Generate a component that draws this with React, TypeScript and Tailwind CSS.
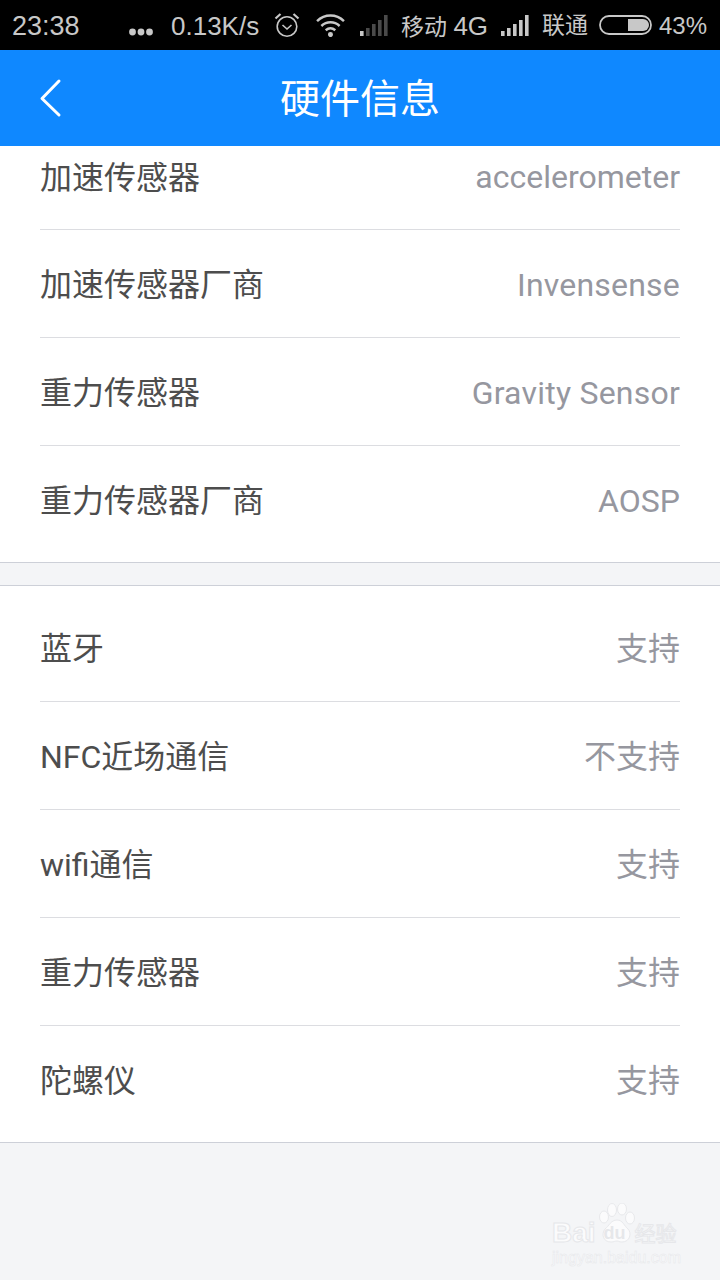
import { ReactNode } from "react";

const sans = "font-['Roboto','Noto_Sans_CJK_SC',sans-serif]";

function Bars({ dim }: { dim?: boolean }) {
  const heights = [5, 8, 12, 16, 21];
  return (
    <svg width="28" height="21" viewBox="0 0 28 21" className="shrink-0">
      {heights.map((h, i) => (
        <rect
          key={i}
          x={i * 6}
          y={21 - h}
          width="3.6"
          height={h}
          fill={dim && i > 0 ? "#4a4a4a" : "#c8c8c8"}
        />
      ))}
    </svg>
  );
}

function StatusBar() {
  return (
    <div className="relative h-[50px] bg-black text-[#c8c8c8] font-['Liberation_Sans','Noto_Sans_CJK_SC',sans-serif]">
      <div className="flex h-full items-center pl-3 text-[27px] leading-none">
        <span className="w-[68px] pt-[2px]">23:38</span>
        <svg width="24" height="8" viewBox="0 0 24 8" className="ml-[49px] mt-[13px] shrink-0" fill="#c8c8c8">
          <circle cx="3.500" cy="4" r="3.400" />
          <circle cx="12" cy="4" r="3.400" />
          <circle cx="20.500" cy="4" r="3.400" />
        </svg>
        <span className="ml-[18px] w-[89px] whitespace-nowrap pt-[2px] text-[26px]">0.13K/s</span>
        <svg width="26" height="26" viewBox="0 0 26 26" className="ml-[14px] shrink-0" fill="none" stroke="#c8c8c8" strokeWidth="1.600">
          <circle cx="13" cy="14.500" r="9.800" />
          <path d="M8.500 13l4.500 4 4.500-4" />
          <path d="M1.500 6.500 6.500 2M24.500 6.500 19.500 2" strokeWidth="2.200" />
        </svg>
        <svg width="31" height="24" viewBox="0 0 32 25" className="ml-[15px] shrink-0" fill="none" stroke="#c8c8c8" strokeWidth="2.600">
          <path d="M2 8.500C10 .8 22 .8 30 8.500" />
          <path d="M6.500 13.500C12 8.500 20 8.500 25.500 13.500" />
          <path d="M11 18c3-2.500 7-2.500 10 0" />
          <circle cx="16" cy="22.500" r="2.600" fill="#c8c8c8" stroke="none" />
        </svg>
        <span className="ml-[14px]"><Bars dim /></span>
        <span className="ml-[13px] w-[87px] whitespace-nowrap pt-[2px] text-[23px]">移动 <span className="text-[26px]">4G</span></span>
        <span className="ml-[13px]"><Bars /></span>
        <span className="ml-[13px] w-[47px] whitespace-nowrap pt-[1px] text-[23px]">联通</span>
        <svg width="54" height="20" viewBox="0 0 54 20" className="ml-[10px] shrink-0">
          <rect x="1" y="1" width="51" height="18" rx="9" fill="none" stroke="#c8c8c8" strokeWidth="1.800" />
          <path d="M29 4h15a6 6 0 0 1 0 12H29z" fill="#c8c8c8" />
        </svg>
        <span className="ml-[6px] pt-[2px] text-[24px]">43%</span>
      </div>
    </div>
  );
}

function Header() {
  return (
    <div className="relative flex h-[96px] items-center justify-center bg-[#0f88ff]">
      <svg width="24" height="40" viewBox="0 0 24 40" className="absolute left-[39px] top-[28px]" fill="none" stroke="#fff" strokeWidth="3" strokeLinecap="round" strokeLinejoin="round">
        <path d="M20 3 3 20.500 20 37" />
      </svg>
      <h1 className={`pt-1 text-[40px] leading-none text-white ${sans}`}>硬件信息</h1>
    </div>
  );
}

function Row({ label, value, className, last }: { label: string; value: ReactNode; className: string; last?: boolean }) {
  return (
    <div className={`flex items-center justify-between ${className} ${last ? "" : "border-b border-[#dcdde1]"}`}>
      <span className="text-[32px] leading-none text-[#4d4d4d]">{label}</span>
      <span className="text-[32px] leading-none text-[#96979f]">{value}</span>
    </div>
  );
}

export default function App() {
  return (
    <div className={`relative h-[1280px] w-[720px] overflow-hidden bg-[#f4f5f7] ${sans}`}>
      <StatusBar />
      <Header />

      <div className="border-b border-[#cdd0d8] bg-white px-10">
        <Row label="加速传感器" value={<span className="block pb-[2px]">accelerometer</span>} className="h-[84px] pb-[20px]" />
        <Row label="加速传感器厂商" value={<span className="tracking-[0.2px]">Invensense</span>} className="h-[108px] pt-[2px]" />
        <Row label="重力传感器" value={<span className="tracking-[0.22px]">Gravity Sensor</span>} className="h-[108px] pt-[2px]" />
        <Row label="重力传感器厂商" value="AOSP" className="h-[116px] pb-[6px]" last />
      </div>

      <div className="mt-[22px] border-y border-[#cdd0d8] bg-white px-10">
        <Row label="蓝牙" value="支持" className="h-[116px] pt-[10px]" />
        <Row label="NFC近场通信" value="不支持" className="h-[108px] pt-[2px]" />
        <Row label="wifi通信" value="支持" className="h-[108px] pt-[2px]" />
        <Row label="重力传感器" value="支持" className="h-[108px] pt-[2px]" />
        <Row label="陀螺仪" value="支持" className="h-[116px] pb-[6px]" last />
      </div>

      {/* watermark */}
      <div className="absolute left-[552px] top-[1203px] w-[130px] font-['Liberation_Sans','Noto_Sans_CJK_SC',sans-serif] text-[#fbfbfc]">
        <svg width="44" height="42" viewBox="0 0 44 42" className="absolute left-[44px] top-[0px]" fill="#fbfbfc" stroke="#e8e9ec" strokeWidth="1">
          <ellipse cx="8" cy="14" rx="4.500" ry="6" />
          <ellipse cx="16" cy="7" rx="4.500" ry="6.500" />
          <ellipse cx="26" cy="6" rx="4.500" ry="6" />
          <ellipse cx="34" cy="15" rx="4.500" ry="6" />
          <path d="M21 17c6 0 7 6 11 9 4 4 2 13-6 13-3 0-3-1-5-1s-3 1-6 1c-8 0-10-8-6-13 4-3 6-9 12-9z" />
        </svg>
        <div className="relative mt-[18px] flex h-[24px] items-center whitespace-nowrap text-[28px] font-bold leading-none [-webkit-text-stroke:1px_#e6e7ea]">
          <span>Bai</span>
          <span className="ml-[8px] w-[27px] text-[18px] text-[#e6e7ea] [-webkit-text-stroke:0px]">du</span>
          <span className="ml-[4px] text-[21px] font-normal">经验</span>
        </div>
        <div className="relative mt-[5px] whitespace-nowrap text-[16px] leading-none [-webkit-text-stroke:0.5px_#e6e7ea]">jingyan.baidu.com</div>
      </div>
    </div>
  );
}
